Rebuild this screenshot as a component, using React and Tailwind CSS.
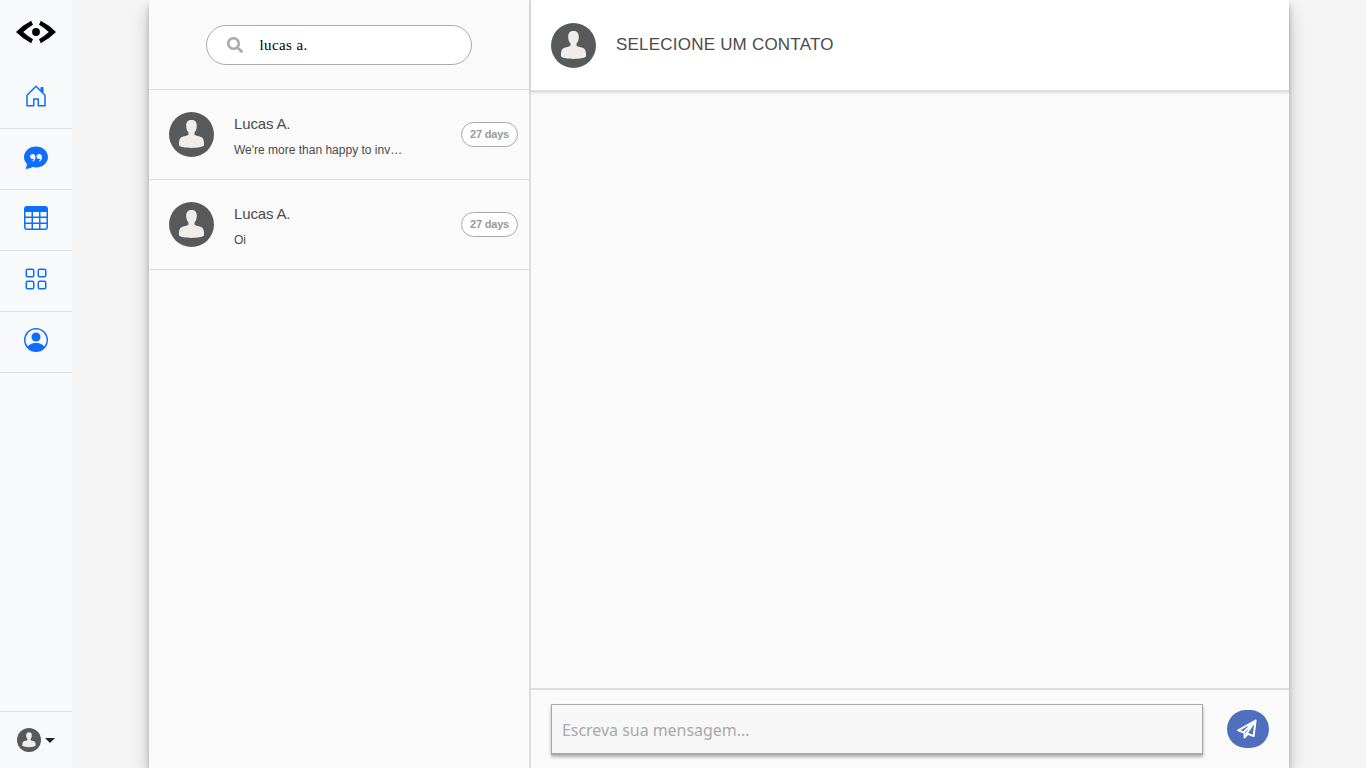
import { BsChatQuoteFill, BsTable, BsGrid, BsPersonCircle } from "react-icons/bs";
import { FaSearch } from "react-icons/fa";

function HomeIcon() {
  return (
    <svg width="24" height="24" viewBox="0 0 16 16" fill="currentColor">
      <path fillRule="evenodd" d="M8.354 1.146a.5.5 0 0 0-.708 0l-6 6A.5.5 0 0 0 1.5 7.5v7a.5.5 0 0 0 .5.5h4.5a.5.5 0 0 0 .5-.5v-4h2v4a.5.5 0 0 0 .5.5H14a.5.5 0 0 0 .5-.5v-7a.5.5 0 0 0-.146-.354L13 5.793V2.5a.5.5 0 0 0-.5-.5h-1a.5.5 0 0 0-.5.5v1.293L8.354 1.146zM2.5 14V7.707l5.5-5.5 5.5 5.5V14H10v-4a.5.5 0 0 0-.5-.5h-3a.5.5 0 0 0-.5.5v4H2.5z" />
    </svg>
  );
}

function Logo() {
  return (
    <svg width="40" height="24" viewBox="0 0 40 24">
      <path d="M0 12Q7 5 15.200.8L17 4.800Q11.800 7.800 7.200 12Q11.800 16.200 17 19.200L15.200 23.200Q7 19 0 12ZM40 12Q33 5 24.800.8L23 4.800Q28.200 7.800 32.800 12Q28.200 16.200 23 19.200L24.800 23.200Q33 19 40 12Z" />
      <circle cx="20" cy="12" r="3.9" />
    </svg>
  );
}

function Avatar({ className }) {
  return (
    <svg className={className} viewBox="0 0 45 45">
      <circle cx="22.5" cy="22.5" r="22.5" fill="#58595b" />
      <path
        d="M22.500 8C19 8 17.200 10 17.200 13.500C17.200 16.800 18 19 19.500 20.600V22.400C18.600 23.900 14.500 23.700 12.200 25.300C10 27 9.800 30.500 10 33.500C12 35.300 16.500 35.900 22.500 35.900S33 35.300 35 33.500C35.200 30.500 35 27 32.800 25.300C30.500 23.700 26.400 23.900 25.500 22.400V20.600C27 19 27.800 16.800 27.800 13.500C27.800 10 26 8 22.500 8Z"
        fill="#f0ece9"
      />
    </svg>
  );
}

function SendIcon() {
  return (
    <svg width="22" height="20" viewBox="0 0 22 20" fill="none" stroke="#fff" strokeWidth="2" strokeLinejoin="round">
      <path d="M18.600 1.500 1.200 11.300l5.200 2.100L18.600 1.500 16.600 17.100l-7-2.800L18.600 1.500M7.600 13.800v4.600l3-3.400" />
    </svg>
  );
}

const navItems = [HomeIcon, BsChatQuoteFill, BsTable, BsGrid, BsPersonCircle];

const contacts = [
  { name: "Lucas A.", message: "We're more than happy to inv…", age: "27 days" },
  { name: "Lucas A.", message: "Oi", age: "27 days" },
];

export default function App() {
  return (
    <div className="flex h-screen overflow-hidden bg-[#f5f5f5] font-['Liberation_Sans',Arial,sans-serif]">
      <nav className="flex w-[72px] shrink-0 flex-col bg-[#f8f9fa]">
        <a className="flex h-[68px] justify-center pt-5">
          <Logo />
        </a>
        {navItems.map((Icon, i) => (
          <a key={i} className="flex h-[61px] justify-center border-b border-[#dee2e6] pt-4 text-[#0d6efd]">
            <Icon size={24} />
          </a>
        ))}
        <div className="mt-auto flex h-[57px] items-center justify-center gap-1 border-t border-[#dee2e6]">
          <Avatar className="size-6" />
          <span className="border-x-[5px] border-t-[5px] border-x-transparent border-t-[#212529]" />
        </div>
      </nav>

      <div className="flex flex-1 justify-center">
        <main className="flex h-full w-[1140px] bg-[#fafafa] shadow-[0_10px_20px_rgba(0,0,0,0.19),0_6px_6px_rgba(0,0,0,0.23)]">
          <aside className="flex w-[382px] flex-col border-r-2 border-[#ddd]">
            <div className="flex h-[90px] items-center justify-center border-b border-[#ddd] pr-[1px]">
              <label className="flex h-10 w-[266px] items-center rounded-[20px] border border-[#aaa] bg-white pl-5">
                <FaSearch size={16} color="#aaa" />
                <input
                  defaultValue="lucas a."
                  className="ml-[17px] w-[180px] bg-transparent pt-px font-['Liberation_Serif',serif] text-[15px] tracking-[0.4px] text-black outline-none"
                />
              </label>
            </div>
            {contacts.map((c, i) => (
              <div key={i} className="flex h-[90px] items-center border-b border-[#ddd] pr-[11px] pl-5">
                <Avatar className="size-[45px] shrink-0" />
                <div className="mt-1 ml-5 w-[180px] text-[#4b4b4b]">
                  <p className="text-[15px] leading-[22px] tracking-[-0.15px]">{c.name}</p>
                  <p className="mt-1 text-[12px] leading-[22px] whitespace-nowrap">{c.message}</p>
                </div>
                <span className="ml-auto flex h-[25px] w-[57px] items-center justify-center rounded-[13px] border border-[#aaa] bg-white text-[11px] font-bold tracking-[-0.2px] text-[#999]">
                  {c.age}
                </span>
              </div>
            ))}
          </aside>

          <section className="flex flex-1 flex-col">
            <header className="flex h-[90px] shrink-0 items-center bg-white pl-5 shadow-[0_2px_0_#ddd,0_3px_3px_rgba(0,0,0,0.12)]">
              <Avatar className="size-[45px]" />
              <h1 className="ml-5 text-[17px] tracking-[0.21px] text-[#4b4b4b]">SELECIONE UM CONTATO</h1>
            </header>
            <div className="flex-1" />
            <footer className="flex h-20 shrink-0 items-start border-t-2 border-[#ddd] px-5 pt-3.5">
              <input
                placeholder="Escreva sua mensagem..."
                className="h-[51px] w-[652px] border border-b-2 border-[#a9a9a9] bg-[#f7f7f7] px-2.5 pt-0.5 font-['Noto_Sans',sans-serif] text-[16px] tracking-[-0.04px] shadow-[0_2px_3px_rgba(0,0,0,0.3)] outline-none placeholder:text-[#a9a9a9]"
              />
              <button className="mt-1.5 ml-auto flex h-[38px] w-[42px] items-center justify-center rounded-[19px] bg-[#4f6ebd]">
                <SendIcon />
              </button>
            </footer>
          </section>
        </main>
      </div>
    </div>
  );
}
